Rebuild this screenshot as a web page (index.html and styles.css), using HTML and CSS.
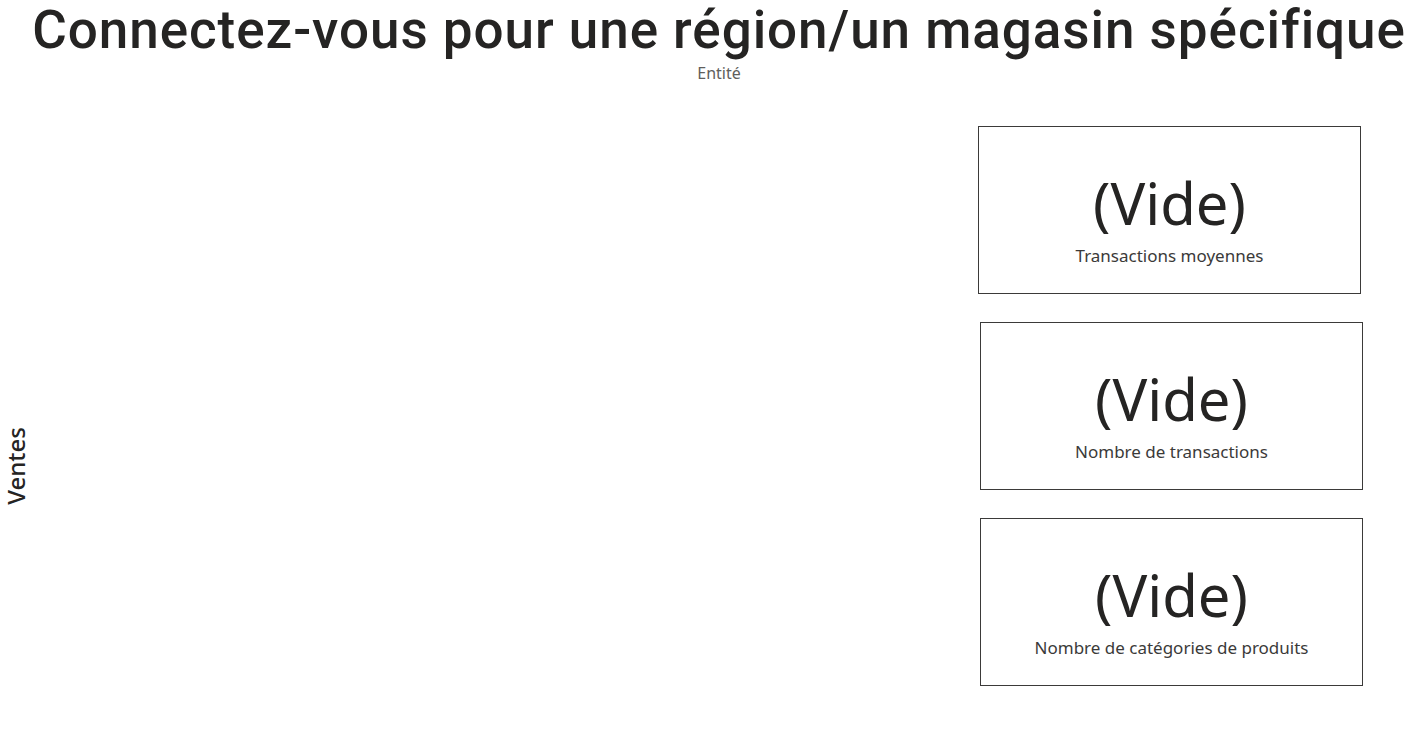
FILE: index.html
```html
<!DOCTYPE html>
<html lang="fr">
<head>
<meta charset="utf-8">
<title>Rapport</title>
<link rel="stylesheet" href="styles.css">
</head>
<body>
<div class="page">
  <header class="header">
    <h1 class="title">Connectez-vous pour une région/un magasin spécifique</h1>
    <div class="subtitle">Entité</div>
  </header>
  <main class="main">
    <section class="chart">
      <div class="axis-label">Ventes</div>
    </section>
    <section class="cards">
      <div class="card card--first">
        <div class="card-value">(Vide)</div>
        <div class="card-label">Transactions moyennes</div>
      </div>
      <div class="card">
        <div class="card-value">(Vide)</div>
        <div class="card-label">Nombre de transactions</div>
      </div>
      <div class="card">
        <div class="card-value">(Vide)</div>
        <div class="card-label">Nombre de catégories de produits</div>
      </div>
    </section>
  </main>
</div>
</body>
</html>
```
FILE: styles.css
```css
html, body {
  margin: 0;
  padding: 0;
  background: #ffffff;
}

.page {
  width: 1424px;
  height: 750px;
  overflow: hidden;
  display: flex;
  flex-direction: column;
  color: #252423;
}

.header {
  display: flex;
  flex-direction: column;
  align-items: center;
  padding-left: 14px;
  padding-top: 1px;
  height: 126px;
  box-sizing: border-box;
}

.title {
  margin: 0;
  font-family: Roboto, "DejaVu Sans Condensed", sans-serif;
  font-weight: 500;
  font-size: 53px;
  line-height: 58px;
  letter-spacing: 0.95px;
  color: #252423;
  white-space: nowrap;
}

.subtitle {
  font-family: "Noto Sans", "Open Sans", sans-serif;
  font-size: 16px;
  line-height: 20px;
  color: #605e5c;
  margin-top: 4px;
}

.main {
  flex: 1;
  display: grid;
  grid-template-columns: 978px 384px;
  align-items: start;
}

.chart {
  height: 624px;
  display: flex;
  align-items: center;
  padding-left: 3px;
  padding-top: 56px;
  box-sizing: border-box;
}

.axis-label {
  writing-mode: vertical-rl;
  transform: rotate(180deg);
  font-family: "Noto Sans", "Open Sans", sans-serif;
  font-weight: 500;
  font-size: 24px;
  line-height: 26px;
  color: #252423;
}

.cards {
  display: flex;
  flex-direction: column;
  gap: 28px;
  padding-left: 2px;
}

.card {
  width: 383px;
  height: 168px;
  box-sizing: border-box;
  border: 1px solid #3b3a39;
  display: flex;
  flex-direction: column;
  align-items: center;
  justify-content: center;
  padding-top: 16px;
}

.card--first {
  margin-left: -2px;
}

.card-value {
  font-family: "Noto Sans", "Open Sans", sans-serif;
  font-size: 58px;
  line-height: 66px;
  color: #252423;
}

.card-label {
  font-family: "Noto Sans", "Open Sans", sans-serif;
  font-size: 17px;
  line-height: 22px;
  margin-top: 9px;
  color: #3b3a39;
}
```
